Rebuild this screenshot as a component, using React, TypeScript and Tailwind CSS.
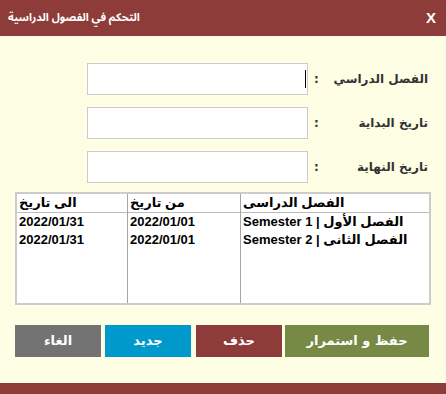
import React from 'react';

const rows = [
  { name: 'الفصل الأول | Semester 1', from: '2022/01/01', to: '2022/01/31' },
  { name: 'الفصل الثانى | Semester 2', from: '2022/01/01', to: '2022/01/31' },
];

const fields = ['الفصل الدراسي', 'تاريخ البداية', 'تاريخ النهاية'];

const App: React.FC = () => {
  return (
    <div className="w-[446px] h-[394px] bg-[#fefee4] flex flex-col" style={{ fontFamily: 'Tahoma, "DejaVu Sans", sans-serif' }}>
      {/* header */}
      <div className="h-9 bg-[#8e3c39] flex items-center justify-between pl-2 pr-[10px] text-white font-bold">
        <span dir="rtl" className="text-[11px]" style={{ fontFamily: '"Noto Sans Arabic", "DejaVu Sans Condensed", "DejaVu Sans", sans-serif' }}>التحكم في الفصول الدراسية</span>
        <span className="text-[15px]" style={{ fontFamily: '"Liberation Sans", sans-serif' }}>X</span>
      </div>

      {/* form */}
      <div className="flex flex-col gap-3 mt-[27px]">
        {fields.map((f, i) => (
          <div key={f} className="flex items-center h-8">
            <div className="ml-[87px] w-[221px] h-8 bg-white border border-[#cbcbcb] flex items-center justify-end pr-[1px]">
              {i === 0 && <div className="w-px h-[18px] bg-black" />}
            </div>
            <span className="ml-[6px] text-[12px] font-bold text-[#333]">:</span>
            <span dir="rtl" className="flex-1 text-right pr-[18px] text-[12px] font-bold text-[#333]">{f}</span>
          </div>
        ))}
      </div>

      {/* table */}
      <div className="mt-[9px] mx-[15px] h-[113px] bg-white border-2 border-[#cccccc] flex flex-row-reverse text-[13px] font-bold text-black" style={{ fontFamily: '"Liberation Sans", "DejaVu Sans", sans-serif' }}>
        <div className="w-[188px] flex flex-col">
          <div className="h-[19px] border-b border-[#bdbdbd] pl-[2px] leading-[18px]" dir="rtl"><div className="text-left">الفصل الدراسى</div></div>
          {rows.map((r) => (
            <div key={r.name} dir="rtl" className="h-[18px] leading-[18px] pl-[2px] text-left">{r.name}</div>
          ))}
        </div>
        <div className="w-[113px] flex flex-col border-r border-[#a6a6a6]">
          <div className="h-[19px] border-b border-[#bdbdbd] pl-[2px] leading-[18px]"><span dir="rtl">من تاريخ</span></div>
          {rows.map((r) => (
            <div key={r.name} className="h-[18px] leading-[18px] pl-[2px]">{r.from}</div>
          ))}
        </div>
        <div className="flex-1 flex flex-col border-r border-[#a6a6a6]">
          <div className="h-[19px] border-b border-[#bdbdbd] pl-[2px] leading-[18px]"><span dir="rtl">الى تاريخ</span></div>
          {rows.map((r) => (
            <div key={r.name} className="h-[18px] leading-[18px] pl-[2px]">{r.to}</div>
          ))}
        </div>
      </div>

      {/* buttons */}
      <div className="mt-5 ml-[15px] flex h-8 text-white text-[13px] font-bold">
        <div className="w-[86px] bg-[#737373] flex items-center justify-center">الغاء</div>
        <div className="ml-1 w-[86px] bg-[#0099cb] flex items-center justify-center">جديد</div>
        <div className="ml-[5px] w-[86px] bg-[#8e3c39] flex items-center justify-center">حذف</div>
        <div className="ml-[3px] w-[144px] bg-[#768a46] flex items-center justify-center" dir="rtl">حفظ و استمرار</div>
      </div>

      <div className="flex-1" />
      <div className="h-[11px] bg-[#8e3c39]" />
    </div>
  );
};

export default App;
